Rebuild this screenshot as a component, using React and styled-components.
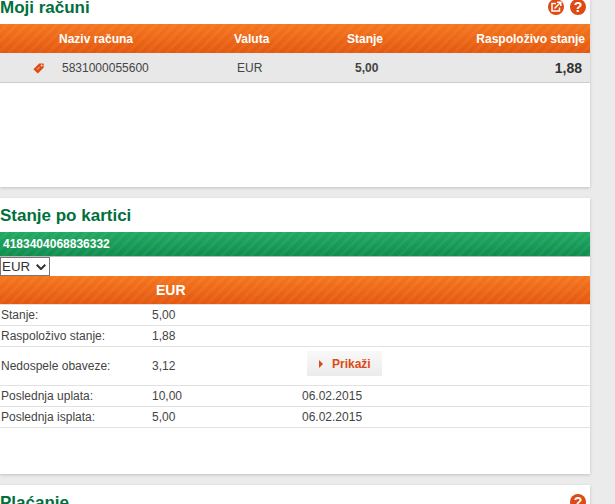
import React from 'react'
import styled, { createGlobalStyle } from 'styled-components'

const GlobalStyle = createGlobalStyle`
  html, body {
    margin: 0;
    padding: 0;
    height: 100%;
    overflow: hidden;
    background: #ebebeb;
  }
`;

const stripes = `repeating-linear-gradient(135deg, rgba(255,255,255,0) 0 4px, rgba(255,255,255,0.05) 4px 7px)`;

const chevron = `url("data:image/svg+xml,%3Csvg xmlns='http://www.w3.org/2000/svg' width='10' height='6'%3E%3Cpath d='M0.7 0.7L5 5L9.3 0.7' fill='none' stroke='%23333' stroke-width='2'/%3E%3C/svg%3E")`;

const Page = styled.div`
  width: 590px;
  margin-top: -10px;
  display: flex;
  flex-direction: column;
  gap: 11px;
  font-family: "Liberation Sans", Arial, sans-serif;
  font-size: 12px;
  color: #444;
`;

const Panel = styled.section`
  background: #fff;
  box-shadow: 0 1px 3px rgba(0,0,0,0.18);
  height: ${props => props.height}px;
`;

const PanelHead = styled.div`
  display: flex;
  align-items: flex-start;
  justify-content: space-between;
  height: 34px;
  padding-right: 4px;
`;

const Title = styled.h2`
  margin: 0;
  padding-top: 8px;
  font-size: 17px;
  line-height: 19px;
  font-weight: bold;
  color: #00703c;
`;

const Tools = styled.div`
  display: flex;
  gap: 6px;
  padding-top: 9px;
`;

const RoundIcon = styled.span`
  width: 16px;
  height: 16px;
  border-radius: 50%;
  background: #dd4a14;
  color: #fff;
  display: flex;
  align-items: center;
  justify-content: center;
  font-size: 14px;
  font-weight: bold;
  line-height: 16px;
`;

const AccountRow = styled.div`
  display: grid;
  grid-template-columns: 59px 175px 113px 1fr;
  align-items: center;
`;

const AccountHead = styled(AccountRow)`
  height: 29px;
  color: #fff;
  font-weight: bold;
  background: ${stripes}, linear-gradient(#f5771f, #e4580f);
`;

const AccountBody = styled(AccountRow)`
  height: 29px;
  background: #e8e8e8;
  border-bottom: 1px solid #ccc;
`;

const TagCell = styled.div`
  display: flex;
  justify-content: flex-end;
  padding: 1px 15px 0 0;
`;

const Cell = styled.div`
  padding-left: ${props => props.inset || 0}px;
`;

const Balance = styled.div`
  display: flex;
  justify-content: space-between;
  align-items: center;
  font-weight: bold;
  padding-left: ${props => props.inset || 0}px;
  padding-right: ${props => props.end || 0}px;
`;

const Big = styled.span`
  font-size: 14px;
  color: #333;
`;

const CardBar = styled.div`
  height: 24px;
  line-height: 24px;
  padding-left: 3px;
  color: #fff;
  font-weight: bold;
  background: ${stripes}, linear-gradient(#22aa63, #0f8d4e);
  border-bottom: 1px solid #bbb;
`;

const CurrencySelect = styled.select`
  display: block;
  appearance: none;
  width: 50px;
  height: 19px;
  padding: 0 0 0 1px;
  margin: 0;
  background: #fff ${chevron} no-repeat 35px 6px;
  border: 1px solid #767676;
  border-radius: 0;
  font-family: "Liberation Sans", Arial, sans-serif;
  font-size: 13.33px;
  color: #333;
`;

const CurrencyHead = styled.div`
  height: 28px;
  line-height: 28px;
  padding-left: 156px;
  color: #fff;
  font-size: 14px;
  font-weight: bold;
  background: ${stripes}, linear-gradient(#f5771f, #e4580f);
  border-bottom: 1px solid #e2e2e2;
`;

const DetailRow = styled.div`
  display: grid;
  grid-template-columns: 151px 150px 1fr;
  align-items: center;
  height: ${props => props.height || 20}px;
  padding-left: 1px;
  border-bottom: 1px solid #e2e2e2;
`;

const ShowButton = styled.button`
  display: flex;
  align-items: center;
  gap: 9px;
  width: 75px;
  height: 25px;
  margin: 0 0 5px 5px;
  padding: 0 0 0 12px;
  border: none;
  background: linear-gradient(#f8f8f8, #ececec);
  color: #dd4a14;
  font-family: "Liberation Sans", Arial, sans-serif;
  font-size: 12px;
  font-weight: bold;
`;

const Arrow = styled.span`
  width: 0;
  height: 0;
  border-left: 4px solid #dd4a14;
  border-top: 4px solid transparent;
  border-bottom: 4px solid transparent;
`;

const LinkIcon = () => (
  <svg width="12" height="12" viewBox="0 0 12 12" fill="none" stroke="#fff" strokeWidth="1.5">
    <path d="M6 2.5H2v7.5h7.5V6.5" />
    <path d="M4.5 7.5L10 2" />
    <path d="M7 1.2h3.8V5" />
  </svg>
)

const TagIcon = () => (
  <svg width="11" height="11" viewBox="0 0 11 11">
    <path d="M6.2 0.4L10.6 0.4V4.8L4.8 10.6L0.4 6.2Z" fill="#dd4a14" />
    <circle cx="8.6" cy="2.4" r="0.9" fill="#fff" />
    <path d="M3.6 6.2L6.2 3.8L7 4.6L4.4 7Z" fill="#f2a285" />
  </svg>
)

const details = [
  { label: 'Stanje:', value: '5,00' },
  { label: 'Raspoloživo stanje:', value: '1,88' },
  { label: 'Nedospele obaveze:', value: '3,12', height: 38, action: true },
  { label: 'Poslednja uplata:', value: '10,00', date: '06.02.2015' },
  { label: 'Poslednja isplata:', value: '5,00', date: '06.02.2015' },
]

const App = () => {
  return (
    <>
      <GlobalStyle />
      <Page>
        <Panel height={197}>
          <PanelHead>
            <Title>Moji računi</Title>
            <Tools>
              <RoundIcon><LinkIcon /></RoundIcon>
              <RoundIcon>?</RoundIcon>
            </Tools>
          </PanelHead>
          <AccountHead>
            <span />
            <Cell>Naziv računa</Cell>
            <Cell>Valuta</Cell>
            <Balance end={5}>
              <span>Stanje</span>
              <span>Raspoloživo stanje</span>
            </Balance>
          </AccountHead>
          <AccountBody>
            <TagCell><TagIcon /></TagCell>
            <Cell inset={3}>5831000055600</Cell>
            <Cell inset={3}>EUR</Cell>
            <Balance inset={8} end={8}>
              <span>5,00</span>
              <Big>1,88</Big>
            </Balance>
          </AccountBody>
        </Panel>

        <Panel height={276}>
          <PanelHead>
            <Title>Stanje po kartici</Title>
          </PanelHead>
          <CardBar>4183404068836332</CardBar>
          <CurrencySelect defaultValue="EUR">
            <option>EUR</option>
          </CurrencySelect>
          <CurrencyHead>EUR</CurrencyHead>
          {details.map((item, index) => (
            <DetailRow key={index} height={item.height}>
              <span>{item.label}</span>
              <span>{item.value}</span>
              {item.action
                ? <ShowButton><Arrow />Prikaži</ShowButton>
                : <span>{item.date}</span>}
            </DetailRow>
          ))}
        </Panel>

        <Panel height={40}>
          <PanelHead>
            <Title>Plaćanje</Title>
            <Tools>
              <RoundIcon>?</RoundIcon>
            </Tools>
          </PanelHead>
        </Panel>
      </Page>
    </>
  )
}

export default App
